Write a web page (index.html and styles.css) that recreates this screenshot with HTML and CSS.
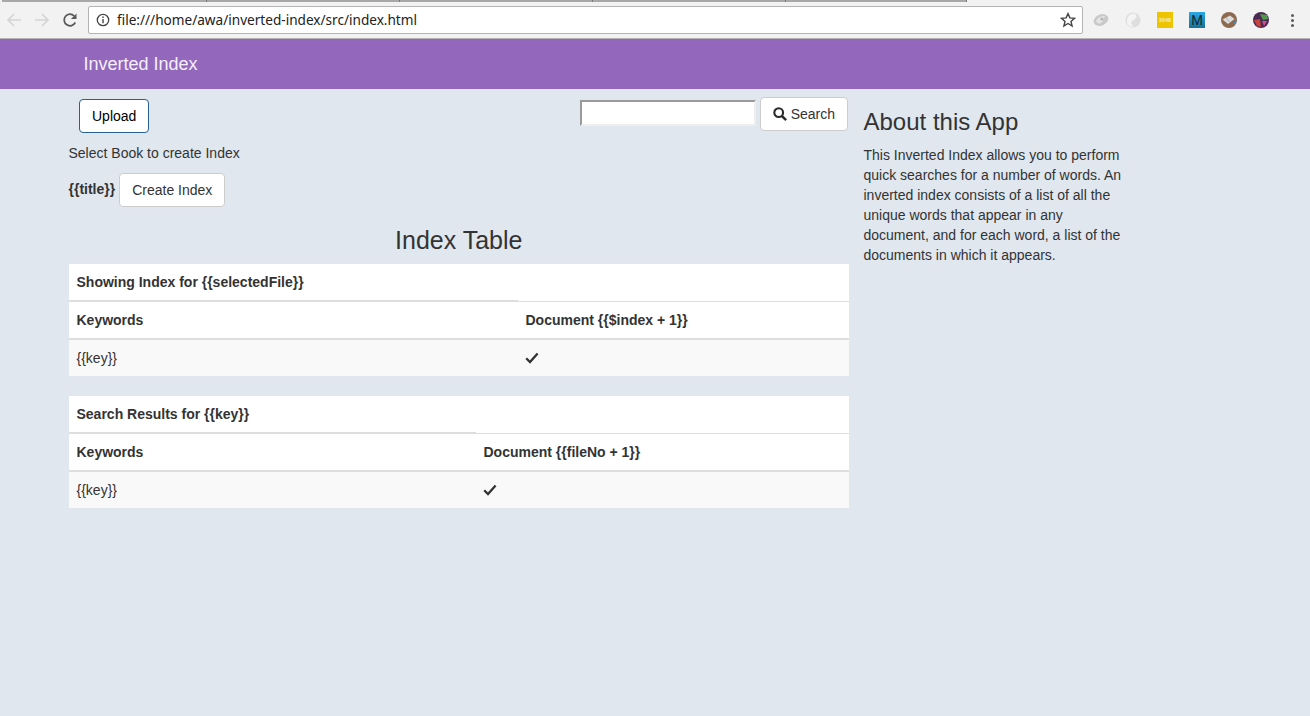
FILE: index.html
```html
<!DOCTYPE html>
<html lang="en">
<head>
    <meta charset="UTF-8">
    <title>Inverted Index</title>
    <link rel="stylesheet" href="styles.css">
</head>
<body>
    <div class="browser">
        <div class="tabstrip"><span class="tab tab-a"></span><span class="tab"></span><span class="tab"></span><span class="tab"></span><span class="tab tab-e"></span></div>
        <div class="toolbar">
            <svg class="nav-icon" viewBox="0 0 16 16" width="16" height="16"><path d="M15 8H2M8 2L2 8l6 6" fill="none" stroke="#d5d5d5" stroke-width="1.7"/></svg>
            <svg class="nav-icon" viewBox="0 0 16 16" width="16" height="16"><path d="M1 8h13M8 2l6 6-6 6" fill="none" stroke="#d5d5d5" stroke-width="1.7"/></svg>
            <svg class="nav-icon" viewBox="0 0 16 16" width="16" height="16"><path d="M13.2 10.5A5.8 5.8 0 1 1 12.2 4" fill="none" stroke="#5a5a5a" stroke-width="1.8"/><path d="M14.5 1.5v5.6H8.9z" fill="#5a5a5a"/></svg>
            <div class="omnibox">
                <svg viewBox="0 0 14 14" width="14" height="14"><circle cx="7" cy="7" r="5.7" fill="none" stroke="#444" stroke-width="1.3"/><path d="M7 6v4.2M7 3.6v1.4" stroke="#444" stroke-width="1.4"/></svg>
                <span class="url">file:///home/awa/inverted-index/src/index.html</span>
                <svg class="star" viewBox="0 0 16 16" width="16" height="16"><path d="M8 1.6l1.9 4.3 4.6.4-3.5 3.1 1.1 4.6L8 11.5 3.9 14 5 9.4 1.5 6.3l4.6-.4z" fill="none" stroke="#444" stroke-width="1.4"/></svg>
            </div>
            <div class="extensions">
                <svg viewBox="0 0 16 16" width="16" height="16"><ellipse cx="8" cy="8" rx="7.6" ry="5.6" fill="#c9c9c9" transform="rotate(-25 8 8)"/><path d="M3 9c2-4 6-5 9-5-1 2-1 5-4 7-2 1-4 0-5-2z" fill="#e4e4e4"/><circle cx="9" cy="7" r="1.6" fill="#b5b5b5"/></svg>
                <svg viewBox="0 0 16 16" width="16" height="16"><circle cx="8" cy="8" r="7.6" fill="#dedede"/><path d="M9.5 1.5c3 2 3 4-1 6.5-3 2-3 4 0 6.500-5 .5-7-3-6.500-6.500C2.500 4 5.500 1 9.500 1.500z" fill="#f4f4f4"/></svg>
                <span class="ext-tile ext-2048">2048</span>
                <span class="ext-tile ext-m">M</span>
                <svg viewBox="0 0 16 16" width="16" height="16"><circle cx="8" cy="8" r="8" fill="#8d6a4d"/><path d="M13 12.5A8 8 0 0 0 16 8l-3 2z" fill="#3d8fc4"/><path d="M1.5 7.5L9 3.5l4.5 3.5L7 12z" fill="#dcdcdc"/><path d="M5 5.5l3.5 4.5" stroke="#a9a9a9" stroke-width=".8"/></svg>
                <svg viewBox="0 0 16 16" width="16" height="16"><circle cx="8" cy="8" r="8" fill="#4a2a55"/><path d="M7 2l7 1 1 4-5 1z" fill="#4f9a4a"/><path d="M1 8l6-1 1 8-4-1z" fill="#c8413c"/><path d="M9 9l5 0-3 5z" fill="#d0508a"/></svg>
            </div>
            <span class="menu-dots"><i></i><i></i><i></i></span>
        </div>
    </div>

    <header class="navbar"><a class="brand">Inverted Index</a></header>

    <div class="content">
        <main class="main-col">
            <div class="top-row">
                <button class="btn btn-upload">Upload</button>
                <form class="search">
                    <input class="search-input" type="text">
                    <button class="btn btn-search" type="button">
                        <svg viewBox="0 0 16 16" width="14" height="14"><circle cx="6.5" cy="6.5" r="5" fill="none" stroke="#2a2a2a" stroke-width="2.4"/><path d="M10.3 10.3L15 15" stroke="#2a2a2a" stroke-width="2.8"/></svg>
                        Search
                    </button>
                </form>
            </div>
            <p class="select-label">Select Book to create Index</p>
            <div class="book-row">
                <b>{{title}}</b>
                <button class="btn">Create Index</button>
            </div>
            <h3 class="table-title">Index Table</h3>
            <table class="table">
                <colgroup><col class="col-index"><col></colgroup>
                <tr class="caption-row"><th>Showing Index for {{selectedFile}}</th><td></td></tr>
                <tr><th>Keywords</th><th>Document {{$index + 1}}</th></tr>
                <tr class="striped"><td>{{key}}</td><td><svg class="check" viewBox="0 0 14 12" width="14" height="12"><path d="M1.2 6.2L5 10l7.6-8.4" fill="none" stroke="#333" stroke-width="2.3"/></svg></td></tr>
            </table>
            <table class="table">
                <colgroup><col class="col-search"><col></colgroup>
                <tr class="caption-row"><th>Search Results for {{key}}</th><td></td></tr>
                <tr><th>Keywords</th><th>Document {{fileNo + 1}}</th></tr>
                <tr class="striped"><td>{{key}}</td><td><svg class="check" viewBox="0 0 14 12" width="14" height="12"><path d="M1.2 6.2L5 10l7.6-8.4" fill="none" stroke="#333" stroke-width="2.3"/></svg></td></tr>
            </table>
        </main>
        <aside class="side-col">
            <h3 class="about-title">About this App</h3>
            <p>This Inverted Index allows you to perform quick searches for a number of words. An inverted index consists of a list of all the unique words that appear in any document, and for each word, a list of the documents in which it appears.</p>
        </aside>
    </div>
</body>
</html>
```

FILE: styles.css
```css
* {
    box-sizing: border-box;
}
html, body {
    height: 100%;
}
body {
    margin: 0;
    font-family: "Liberation Sans", Arial, sans-serif;
    font-size: 14px;
    line-height: 20px;
    color: #333;
    background-color: #e0e7ef;
    overflow: hidden;
}

/* browser chrome */
.browser {
    height: 39px;
    background: #f2f2f2;
    border-bottom: 1px solid #b5b5b5;
}
.tabstrip {
    display: flex;
    height: 2px;
    padding-left: 2px;
}
.tab {
    width: 193px;
    height: 2px;
    background: #a8a8a8;
    border-right: 1px solid #777;
}
.tab-a { width: 205px; }
.tab-e { width: 181px; }
.toolbar {
    display: flex;
    align-items: center;
    height: 36px;
    padding: 0 0 0 6px;
}
.nav-icon {
    flex: none;
    margin-right: 12px;
}
.nav-icon:nth-child(3) {
    margin-right: 10px;
}
.omnibox {
    display: flex;
    align-items: center;
    width: 995px;
    height: 28px;
    padding: 0 6px 0 7px;
    background: #fff;
    border: 1px solid #b4b4b4;
    border-radius: 2px;
}
.url {
    margin-left: 7px;
    font-family: "Noto Sans", sans-serif;
    font-size: 13.6px;
    color: #222;
}
.star {
    margin-left: auto;
}
.extensions {
    display: flex;
    align-items: center;
    gap: 16px;
    margin-left: 10px;
}
.ext-tile {
    display: block;
    width: 16px;
    height: 16px;
    text-align: center;
}
.ext-2048 {
    background: #eec400;
    color: #fbeeb0;
    font-size: 5.5px;
    font-weight: bold;
    line-height: 16px;
}
.ext-m {
    background: linear-gradient(#2aa8e6, #1a6f96);
    color: #10232e;
    font-size: 14px;
    line-height: 16px;
}
.menu-dots {
    display: flex;
    flex-direction: column;
    gap: 2px;
    margin-left: 22px;
}
.menu-dots i {
    width: 3px;
    height: 3px;
    border-radius: 50%;
    background: #5a5a5a;
}

/* page */
.navbar {
    height: 50px;
    padding: 0 83.5px;
    background-color: #9368bc;
}
.brand {
    font-size: 18px;
    line-height: 50px;
    color: #f3eef8;
}
.content {
    display: flex;
    padding-left: 68.5px;
}
.main-col {
    width: 780.5px;
}
.side-col {
    width: 266px;
    margin-left: 14.5px;
}
.side-col p {
    margin: 0;
    color: #333;
}
.about-title {
    margin: 19px 0 10px;
    font-size: 24px;
    font-weight: 400;
    line-height: 27px;
}
.top-row {
    display: flex;
    justify-content: space-between;
    align-items: flex-start;
    height: 44px;
    padding: 8px 1px 0 10.5px;
}
.btn {
    height: 34px;
    padding: 6px 12px;
    font-family: inherit;
    font-size: 14px;
    line-height: 20px;
    color: #333;
    background: #fff;
    border: 1px solid #ccc;
    border-radius: 4px;
}
.btn-upload {
    margin-top: 2px;
    color: #000;
    border-color: #286090;
}
.search {
    display: flex;
    gap: 4px;
    margin: 0;
}
.search-input {
    width: 176px;
    height: 26px;
    margin-top: 3px;
    padding: 1px;
    background: #fff;
    border-width: 2px;
    border-style: solid;
    border-color: #9a9a9a #eee #eee #9a9a9a;
}
.btn-search svg {
    vertical-align: -2px;
}
.select-label {
    margin: 10px 0 10px;
}
.book-row {
    display: flex;
    align-items: center;
    gap: 4px;
}
.book-row b {
    position: relative;
    top: -1px;
}
.table-title {
    margin: 20px 0 10px;
    font-size: 25px;
    font-weight: 400;
    line-height: 27px;
    text-align: center;
}
.table {
    width: 100%;
    margin-bottom: 20px;
    border-collapse: collapse;
    background: #fff;
}
.col-index {
    width: 449px;
}
.col-search {
    width: 407px;
}
.table th, .table td {
    height: 37px;
    padding: 8px;
    text-align: left;
    vertical-align: middle;
    border-top: 1px solid #ddd;
}
.table tr:first-child th, .table tr:first-child td {
    border-top: 0;
}
.caption-row th {
    border-bottom: 2px solid #ddd;
}
.table tr:nth-child(2) th {
    border-bottom: 2px solid #ddd;
}
.table tr:nth-child(2) th, .table tr:nth-child(2) td {
    border-top: 1px solid #ddd;
}
.striped td {
    background: #f9f9f9;
    border-top: 0;
}
.check {
    display: block;
    margin-left: -1px;
}
```
